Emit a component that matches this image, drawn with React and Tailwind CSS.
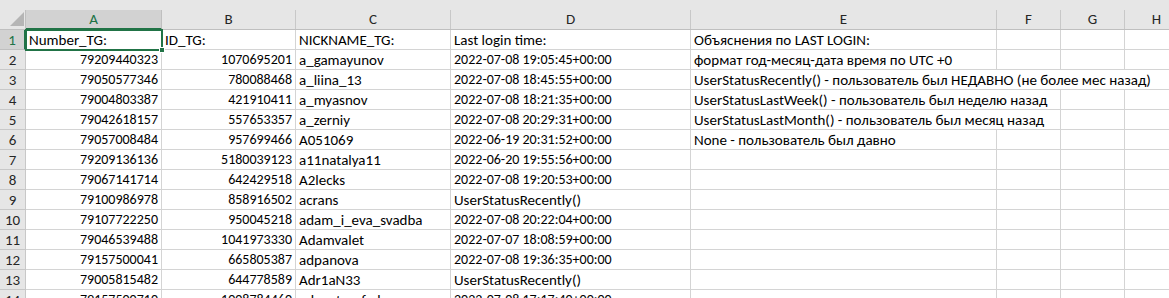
import React from 'react'

const cols = [
  { key: 'A', w: 'w-[136px]' },
  { key: 'B', w: 'w-[134px]' },
  { key: 'C', w: 'w-[155px]' },
  { key: 'D', w: 'w-[240px]' },
  { key: 'E', w: 'w-[306px]' },
  { key: 'F', w: 'w-[64px]' },
  { key: 'G', w: 'w-[64px]' },
  { key: 'H', w: 'w-[64px]' },
]

// [A, B, C, D, E, span of E]
const rows = [
  ['Number_TG:', 'ID_TG:', 'NICKNAME_TG:', 'Last login time:', 'Объяснения по LAST LOGIN:', 1],
  ['79209440323', '1070695201', 'a_gamayunov', '2022-07-08 19:05:45+00:00', 'формат год-месяц-дата время по UTC +0', 1],
  ['79050577346', '780088468', 'a_liina_13', '2022-07-08 18:45:55+00:00', 'UserStatusRecently() - пользователь был НЕДАВНО (не более мес назад)', 4],
  ['79004803387', '421910411', 'a_myasnov', '2022-07-08 18:21:35+00:00', 'UserStatusLastWeek() - пользователь был неделю назад', 2],
  ['79042618157', '557653357', 'a_zerniy', '2022-07-08 20:29:31+00:00', 'UserStatusLastMonth() - пользователь был месяц назад', 2],
  ['79057008484', '957699466', 'A051069', '2022-06-19 20:31:52+00:00', 'None - пользователь был давно', 1],
  ['79209136136', '5180039123', 'a11natalya11', '2022-06-20 19:55:56+00:00', '', 1],
  ['79067141714', '642429518', 'A2lecks', '2022-07-08 19:20:53+00:00', '', 1],
  ['79100986978', '858916502', 'acrans', 'UserStatusRecently()', '', 1],
  ['79107722250', '950045218', 'adam_i_eva_svadba', '2022-07-08 20:22:04+00:00', '', 1],
  ['79046539488', '1041973330', 'Adamvalet', '2022-07-07 18:08:59+00:00', '', 1],
  ['79157500041', '665805387', 'adpanova', '2022-07-08 19:36:35+00:00', '', 1],
  ['79005815482', '644778589', 'Adr1aN33', 'UserStatusRecently()', '', 1],
  ['79157500710', '1008784460', 'adventurefed', '2022-07-08 17:17:40+00:00', '', 1],
]

const spanW = { 1: 'w-[306px]', 2: 'w-[370px]', 4: 'w-[498px]' }

const isNum = (s) => /^[\d\-: +]+$/.test(s)

function Cell({ w, right, children, className = '' }) {
  const size = typeof children === 'string' && isNum(children) ? 'text-[14px]' : 'text-[15px]'
  return (
    <div
      className={`${w} h-[20px] shrink-0 border-r border-b border-[#d4d4d4] leading-[20px] whitespace-nowrap ${size} ${
        right ? 'text-right pr-[3px]' : 'pl-[3px]'
      } ${className}`}
    >
      {children}
    </div>
  )
}

export default function App() {
  return (
    <div
      className="w-[1169px] h-[298px] overflow-hidden bg-white text-[15px] text-black"
      style={{ fontFamily: 'Calibri, Carlito, Lato, "Noto Sans", sans-serif' }}
    >
      {/* top band */}
      <div className="h-[10px] bg-[#e6e6e6]" />

      {/* column headers */}
      <div className="flex h-[20px] bg-[#e6e6e6] border-b border-[#bfbfbf]">
        <div className="w-[26px] shrink-0 relative border-r border-[#bfbfbf]">
          <svg width="14" height="14" className="absolute right-[1px] bottom-[3px]">
            <polygon points="14,0 14,14 0,14" fill="#b5b5b5" />
          </svg>
        </div>
        {cols.map((c, i) => (
          <div
            key={c.key}
            className={`${c.w} shrink-0 text-center leading-[19px] border-r ${
              i === 0
                ? 'bg-[#d2d2d2] text-[#217346] border-[#bfbfbf] border-b-2 border-b-[#217346] -mb-px'
                : 'text-[#262626] border-[#c8c8c8]'
            }`}
          >
            {c.key}
          </div>
        ))}
      </div>

      {/* rows */}
      {rows.map((r, i) => (
        <div key={i} className="flex h-[20px]">
          <div
            className={`w-[26px] shrink-0 h-[20px] text-center leading-[20px] border-r border-b ${
              i === 0
                ? 'bg-[#d2d2d2] text-[#217346] border-[#bfbfbf] border-r-2 border-r-[#217346]'
                : 'bg-[#e6e6e6] text-[#262626] border-[#c8c8c8]'
            }`}
          >
            {i + 1}
          </div>
          {i === 0 ? (
            <Cell w="w-[136px]" className="relative outline-2 outline-[#217346] -outline-offset-1 z-10">
              {r[0]}
              <span className="absolute -right-[4px] -bottom-[4px] w-[6px] h-[6px] bg-[#217346] border border-white" />
            </Cell>
          ) : (
            <Cell w="w-[136px]" right>{r[0]}</Cell>
          )}
          <Cell w="w-[134px]" right={i !== 0}>{r[1]}</Cell>
          <Cell w="w-[155px]">{r[2]}</Cell>
          <Cell w="w-[240px]">{r[3]}</Cell>
          <Cell w={spanW[r[5]]}>{r[4]}</Cell>
          {r[5] < 2 && <Cell w="w-[64px]" />}
          {r[5] < 3 && <Cell w="w-[64px]" />}
          {r[5] < 4 && <Cell w="w-[64px]" />}
        </div>
      ))}
    </div>
  )
}
